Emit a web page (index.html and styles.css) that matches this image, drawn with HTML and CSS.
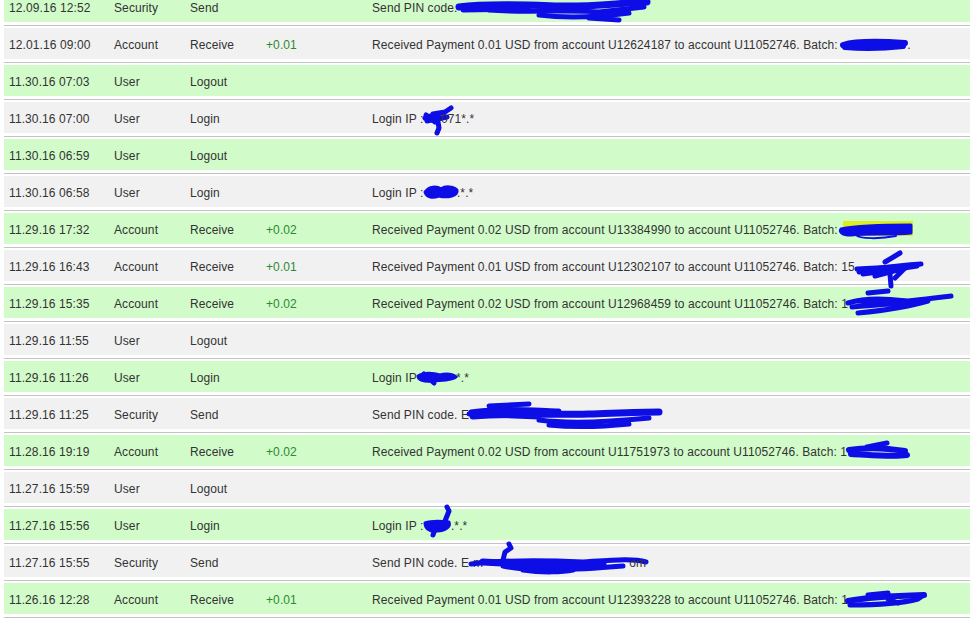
FILE: index.html
```html
<!DOCTYPE html>
<html>
<head>
<meta charset="utf-8">
<title>History</title>
<link rel="stylesheet" href="styles.css">
</head>
<body>
<ul class="log">
  <li class="entry"><div class="row g"><span>12.09.16 12:52</span><span>Security</span><span>Send</span><span class="amt"></span><span class="desc">Send PIN code. E<svg class="scr" width="180" height="14"><path class="w6" d="M-10,6 C20,2 60,4 90,5 S150,2 178,1"/><path d="M20,9 C60,12 100,8 130,11 L175,6"/><path d="M70,14 C100,18 130,16 160,12"/><path d="M120,17 L150,19"/><path d="M40,4 L110,7"/><path d="M-6,9 L60,8"/></svg></span></div></li>
  <li class="entry"><div class="row s"><span>12.01.16 09:00</span><span>Account</span><span>Receive</span><span class="amt">+0.01</span><span class="desc">Received Payment 0.01 USD from account U12624187 to account U11052746. Batch: <svg class="scr" width="66" height="14"><path class="w5" d="M2,7 C15,3 35,3 64,5"/><path class="w5" d="M4,9 C25,11 45,10 62,8"/><path class="w5" d="M10,6 L55,7"/></svg>.</span></div></li>
  <li class="entry"><div class="row g"><span>11.30.16 07:03</span><span>User</span><span>Logout</span><span class="amt"></span><span class="desc"></span></div></li>
  <li class="entry"><div class="row s"><span>11.30.16 07:00</span><span>User</span><span>Login</span><span class="amt"></span><span class="desc">Login IP : <svg class="scr" width="14" height="14"><path d="M-2,6 C4,2 10,4 14,6"/><path d="M0,9 L20,5"/><path d="M6,2 L18,0 L24,-4"/><path d="M10,4 L12,16 L10,21"/><path d="M-1,3 L8,10"/></svg>071*.*</span></div></li>
  <li class="entry"><div class="row g"><span>11.30.16 06:59</span><span>User</span><span>Logout</span><span class="amt"></span><span class="desc"></span></div></li>
  <li class="entry"><div class="row s"><span>11.30.16 06:58</span><span>User</span><span>Login</span><span class="amt"></span><span class="desc">Login IP : <svg class="scr" width="30" height="14"><path class="blob" d="M-2,6 C2,0 10,0 14,3 C18,0 26,0 30,4 C32,10 20,12 12,10 C6,12 0,12 -2,6 Z"/></svg>.*.*</span></div></li>
  <li class="entry"><div class="row g"><span>11.29.16 17:32</span><span>Account</span><span>Receive</span><span class="amt">+0.02</span><span class="desc">Received Payment 0.02 USD from account U13384990 to account U11052746. Batch: <svg class="scr" width="72" height="14"><rect class="hl" x="2" y="-2" width="70" height="15"/><path class="blob" d="M0,6 C20,2 50,2 70,2 L70,10 C50,12 30,10 10,12 C0,12 -2,8 0,6 Z"/><path class="w2" d="M15,12 C18,16 40,16 55,13"/></svg></span></div></li>
  <li class="entry"><div class="row s"><span>11.29.16 16:43</span><span>Account</span><span>Receive</span><span class="amt">+0.01</span><span class="desc">Received Payment 0.01 USD from account U12302107 to account U11052746. Batch: 15<svg class="scr" width="66" height="14"><path d="M4,12 C20,8 40,6 66,4"/><path d="M8,14 C30,12 50,8 62,6"/><path d="M30,2 L45,-7"/><path d="M20,16 L50,8 L40,18"/><path d="M35,14 L36,26"/><path d="M2,9 L40,7"/></svg></span></div></li>
  <li class="entry"><div class="row g"><span>11.29.16 15:35</span><span>Account</span><span>Receive</span><span class="amt">+0.02</span><span class="desc">Received Payment 0.02 USD from account U12968459 to account U11052746. Batch: 1<svg class="scr" width="60" height="14"><path d="M0,6 C20,0 40,2 60,4 C80,2 95,0 103,-1"/><path d="M4,10 C30,8 50,6 80,4 C60,10 30,14 10,16"/><path d="M20,-4 L40,-6"/><path d="M10,4 L50,8"/></svg></span></div></li>
  <li class="entry"><div class="row s"><span>11.29.16 11:55</span><span>User</span><span>Logout</span><span class="amt"></span><span class="desc"></span></div></li>
  <li class="entry"><div class="row g"><span>11.29.16 11:26</span><span>User</span><span>Login</span><span class="amt"></span><span class="desc">Login IP <svg class="scr" width="36" height="14"><path class="blob" d="M-2,5 C4,1 14,2 20,4 C26,2 34,3 36,6 C32,10 20,9 12,10 C4,11 -2,9 -2,5 Z"/><path d="M4,3 L14,12"/></svg>*.*</span></div></li>
  <li class="entry"><div class="row s"><span>11.29.16 11:25</span><span>Security</span><span>Send</span><span class="amt"></span><span class="desc">Send PIN code. E<svg class="scr" width="180" height="14"><path d="M2,4 C30,0 60,2 90,3"/><path class="w6" d="M4,8 C40,5 80,7 120,6 C150,5 170,4 190,4"/><path d="M70,12 C100,16 140,14 180,10"/><path d="M80,17 C110,20 140,18 160,16"/><path d="M20,-2 L60,-4"/><path d="M0,6 L70,9"/></svg></span></div></li>
  <li class="entry"><div class="row g"><span>11.28.16 19:19</span><span>Account</span><span>Receive</span><span class="amt">+0.02</span><span class="desc">Received Payment 0.02 USD from account U11751973 to account U11052746. Batch: 1<svg class="scr" width="60" height="14"><path class="w5" d="M2,5 C20,2 40,3 58,6"/><path class="w5" d="M4,9 C25,10 45,12 60,10"/><path d="M20,2 L40,-2"/></svg></span></div></li>
  <li class="entry"><div class="row s"><span>11.27.16 15:59</span><span>User</span><span>Logout</span><span class="amt"></span><span class="desc"></span></div></li>
  <li class="entry"><div class="row g"><span>11.27.16 15:56</span><span>User</span><span>Login</span><span class="amt"></span><span class="desc">Login IP : <svg class="scr" width="24" height="14"><path class="blob" d="M-2,4 C6,1 14,2 22,3 C24,8 18,12 10,12 C2,13 -2,9 -2,4 Z"/><path d="M18,2 L22,-8 L20,-12"/><path d="M8,10 L6,16"/></svg>.*.*</span></div></li>
  <li class="entry"><div class="row s"><span>11.27.16 15:55</span><span>Security</span><span>Send</span><span class="amt"></span><span class="desc">Send PIN code. E-m<svg class="scr" width="146" height="14"><path d="M-12,8 C20,4 60,4 100,6 C130,4 150,2 163,6"/><path class="w6" d="M0,6 C40,8 80,10 120,8"/><path d="M20,10 C50,16 90,14 140,10"/><path d="M40,14 C60,17 80,16 90,14"/><path d="M20,4 L22,-4 L28,-8 L26,-12"/></svg>om</span></div></li>
  <li class="entry"><div class="row g"><span>11.26.16 12:28</span><span>Account</span><span>Receive</span><span class="amt">+0.01</span><span class="desc">Received Payment 0.01 USD from account U12393228 to account U11052746. Batch: 1<svg class="scr" width="62" height="14"><path class="w5" d="M0,8 C20,4 40,3 76,2"/><path d="M2,12 C30,12 55,10 70,6 L76,2"/><path d="M20,2 L40,0"/><path d="M40,6 L50,10"/></svg></span></div></li>
</ul>
</body>
</html>
```
FILE: styles.css
```css
html, body {
  margin: 0;
  padding: 0;
  background: #ffffff;
  overflow: hidden;
}

body {
  font-family: "Liberation Sans", Arial, sans-serif;
  font-size: 12px;
  letter-spacing: 0.1px;
  color: #333333;
}

.log {
  list-style: none;
  margin: -9px 0 0 4px;
  padding: 0;
}

.entry {
  padding-bottom: 3px;
  border-bottom: 1px solid #c3c3c3;
  margin-bottom: 2px;
}

.row {
  box-sizing: border-box;
  height: 31px;
  padding-top: 2px;
  display: grid;
  grid-template-columns: 105px 76px 76px 106px 1fr;
  align-items: center;
  padding-left: 5px;
  white-space: nowrap;
}

.row.g {
  background: #d1fbc9;
}

.row.s {
  background: #f1f1f1;
}

.amt {
  color: #2b8a2e;
}

.scr {
  display: inline-block;
  vertical-align: -3px;
  overflow: visible;
}

.scr path {
  fill: none;
  stroke: #0d0de6;
  stroke-width: 5;
  stroke-linecap: round;
  stroke-linejoin: round;
}

.scr path.w5 {
  stroke-width: 6;
}

.scr path.w6 {
  stroke-width: 7;
}

.scr path.w2 {
  stroke-width: 2;
}

.scr path.blob {
  fill: #0d0de6;
  stroke-width: 3;
}

.scr .hl {
  fill: #dcef1c;
}
```
